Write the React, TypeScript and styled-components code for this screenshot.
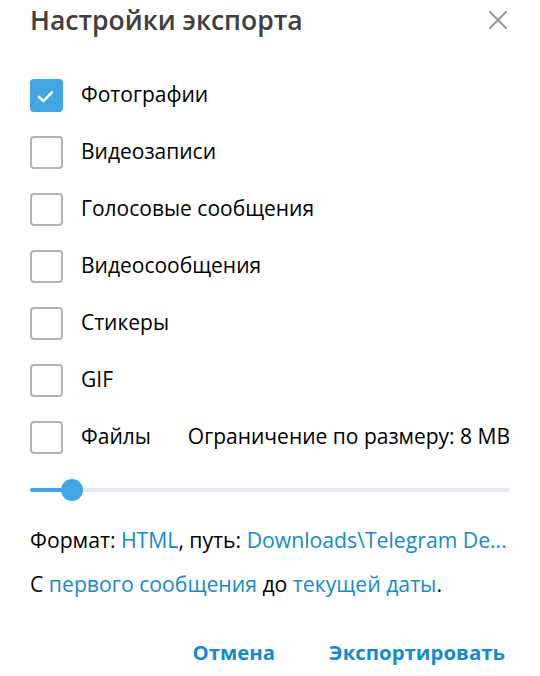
import React, { useState } from "react";
import styled, { createGlobalStyle } from "styled-components";

const GlobalStyle = createGlobalStyle`
  html, body {
    margin: 0;
    padding: 0;
    background: #ffffff;
  }
  body {
    font-family: "Open Sans", "Noto Sans", sans-serif;
  }
`;

const OPTIONS = [
  "Фотографии",
  "Видеозаписи",
  "Голосовые сообщения",
  "Видеосообщения",
  "Стикеры",
  "GIF",
  "Файлы",
];

const CheckIcon = () => (
  <svg width="33" height="33" viewBox="0 0 33 33" fill="none">
    <path
      d="M9 17.8l4.3 4.3 8.6-8.8"
      stroke="#fff"
      strokeWidth="2.6"
      strokeLinecap="round"
      strokeLinejoin="round"
    />
  </svg>
);

const CloseIcon = () => (
  <svg width="18" height="18" viewBox="0 0 18 18">
    <path
      d="M1 1L17 17M17 1L1 17"
      stroke="#999999"
      strokeWidth="2"
      strokeLinecap="round"
    />
  </svg>
);

export default function App() {
  const [checked, setChecked] = useState<boolean[]>([
    true,
    false,
    false,
    false,
    false,
    false,
    false,
  ]);
  const sizePercent = 8.8;

  const toggle = (i: number) => () =>
    setChecked((prev) => prev.map((v, j) => (j === i ? !v : v)));

  return (
    <>
      <GlobalStyle />
      <SBox>
        <SHeader>
          <STitle>Настройки экспорта</STitle>
          <SClose type="button">
            <CloseIcon />
          </SClose>
        </SHeader>
        <SList>
          {OPTIONS.map((label, i) => (
            <SRow key={label}>
              <SCheckLabel onClick={toggle(i)}>
                <SCheckbox checked={checked[i]}>
                  {checked[i] && <CheckIcon />}
                </SCheckbox>
                <SLabelText>{label}</SLabelText>
              </SCheckLabel>
              {label === "Файлы" && (
                <SLimit>Ограничение по размеру: 8 MB</SLimit>
              )}
            </SRow>
          ))}
        </SList>
        <SSlider>
          <STrack>
            <STrackFill style={{ width: `${sizePercent}%` }} />
            <SThumb style={{ left: `${sizePercent}%` }} />
          </STrack>
        </SSlider>
        <SInfo>
          <p>
            Формат: <SLink>HTML</SLink>, путь:{" "}
            <SLink>Downloads\Telegram De...</SLink>
          </p>
          <p>
            С <SLink>первого сообщения</SLink> до <SLink>текущей даты</SLink>.
          </p>
        </SInfo>
        <SFooter>
          <SButton type="button">Отмена</SButton>
          <SButton type="button">Экспортировать</SButton>
        </SFooter>
      </SBox>
    </>
  );
}

const SBox = styled.div`
  width: 540px;
  height: 676px;
  box-sizing: border-box;
  padding: 0 30px;
  display: flex;
  flex-direction: column;
  background: #fff;
  overflow: hidden;
`;

const SHeader = styled.div`
  display: flex;
  justify-content: space-between;
  align-items: center;
  height: 40px;
`;

const STitle = styled.h1`
  margin: 0;
  font-size: 26.5px;
  font-weight: 600;
  color: #404040;
  line-height: 40px;
`;

const SClose = styled.button`
  border: 0;
  background: none;
  padding: 0;
  margin-right: 3px;
  display: flex;
  cursor: pointer;
`;

const SList = styled.div`
  display: flex;
  flex-direction: column;
  gap: 24px;
  margin-top: 39px;
`;

const SRow = styled.div`
  display: flex;
  align-items: center;
  justify-content: space-between;
  height: 33px;
`;

const SCheckLabel = styled.label`
  display: flex;
  align-items: center;
  gap: 18px;
  font-size: 21px;
  line-height: 28px;
  color: #000;
  cursor: pointer;
`;

const SLabelText = styled.span`
  margin-top: -3px;
`;

const SCheckbox = styled.span<{ checked: boolean }>`
  width: 33px;
  height: 33px;
  box-sizing: border-box;
  border-radius: 4px;
  display: flex;
  align-items: center;
  justify-content: center;
  background: ${({ checked }) => (checked ? "#40a7e3" : "#fff")};
  border: ${({ checked }) => (checked ? "0" : "2.5px solid #b3b3b3")};
`;

const SLimit = styled.span`
  font-size: 21px;
  line-height: 28px;
  margin-top: -3px;
  color: #000;
`;

const SSlider = styled.div`
  margin-top: 25px;
  height: 22px;
  display: flex;
  align-items: center;
`;

const STrack = styled.div`
  position: relative;
  width: 100%;
  height: 4px;
  border-radius: 2px;
  background: #e1eaef;
`;

const STrackFill = styled.div`
  height: 100%;
  border-radius: 2px;
  background: #40a7e3;
`;

const SThumb = styled.div`
  position: absolute;
  top: 50%;
  width: 22px;
  height: 22px;
  margin: -11px 0 0 -11px;
  border-radius: 50%;
  background: #40a7e3;
`;

const SInfo = styled.div`
  margin-top: 27px;
  display: flex;
  flex-direction: column;
  gap: 20px;
  & p {
    margin: 0;
    font-size: 21.2px;
    line-height: 24px;
    color: #000;
    white-space: nowrap;
  }
`;

const SLink = styled.span`
  color: #168acd;
`;

const SFooter = styled.div`
  margin-top: 44px;
  display: flex;
  justify-content: flex-end;
  gap: 54px;
  padding-right: 5px;
`;

const SButton = styled.button`
  border: 0;
  background: none;
  padding: 0;
  font-family: "Open Sans", "Noto Sans", sans-serif;
  font-size: 20.4px;
  line-height: 24px;
  font-weight: 700;
  color: #168acd;
  cursor: pointer;
`;
